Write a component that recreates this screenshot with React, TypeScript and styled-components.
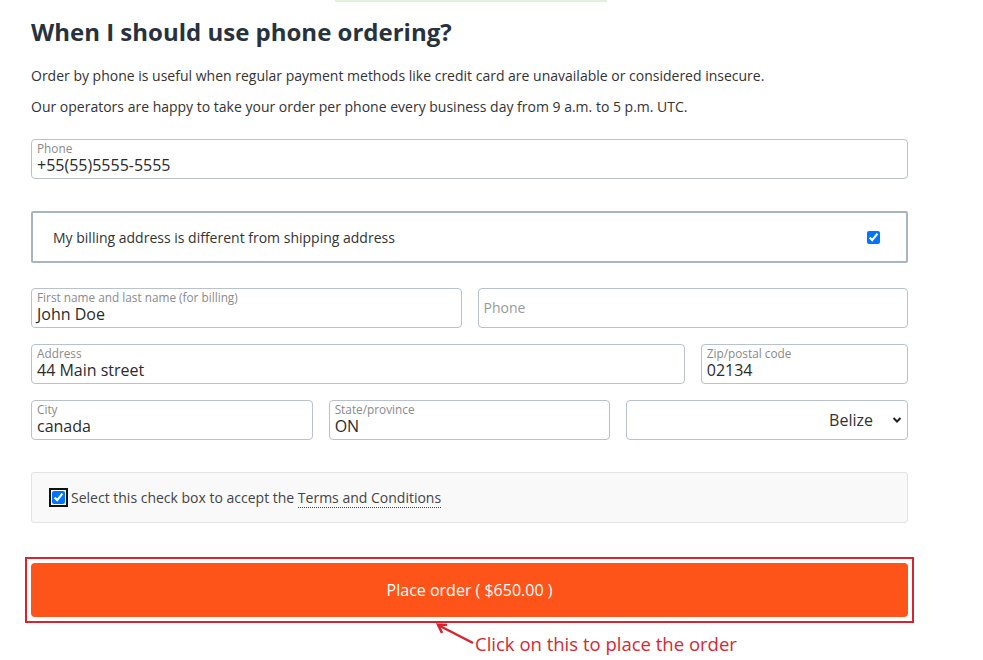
import React from "react";
import styled, { createGlobalStyle } from "styled-components";

const Global = createGlobalStyle`
  html, body { margin: 0; padding: 0; background: #fff; }
  body { font-family: "Open Sans", "Liberation Sans", sans-serif; color: #333; }
  * { box-sizing: border-box; }
`;

const Page = styled.div`
  width: 983px;
  height: 660px;
  overflow: hidden;
  position: relative;
`;

const TopBar = styled.div`
  margin-left: 335px;
  width: 272px;
  height: 2px;
  background: #e4f0dc;
`;

const Container = styled.div`
  width: 877px;
  margin-left: 31px;
  display: flex;
  flex-direction: column;
`;

const Heading = styled.h2`
  margin: 15px 0 0;
  font-size: 24px;
  line-height: 29px;
  font-weight: 700;
  color: #28323d;
`;

const Para = styled.p<{ $top: number }>`
  margin: ${(p) => p.$top}px 0 0;
  font-size: 14px;
  line-height: 21px;
  color: #333;
`;

const Field = styled.label<{ $span: number }>`
  grid-column: span ${(p) => p.$span};
  display: flex;
  flex-direction: column;
  justify-content: center;
  height: 40px;
  padding: 1px 5px 3px;
  border: 1px solid #b9c2cc;
  border-radius: 4px;
  background: #fff;
`;

const FieldLabel = styled.span`
  font-size: 11.8px;
  line-height: 15px;
  color: #8a8a8a;
`;

const FieldValue = styled.span`
  font-size: 16px;
  line-height: 19px;
  color: #2b2b2b;
`;

const Placeholder = styled.span`
  font-size: 14px;
  line-height: 19px;
  color: #999;
`;

const PhoneWrap = styled.div`
  margin-top: 22px;
  display: grid;
  grid-template-columns: repeat(12, 1fr);
`;

const BillingBox = styled.label`
  margin-top: 32px;
  height: 52px;
  border: 2px solid #a8b4c0;
  border-radius: 2px;
  display: flex;
  align-items: center;
  justify-content: space-between;
  padding: 0 26px 0 20px;
  font-size: 14px;
  color: #333;
`;

const Check = styled.input.attrs({ type: "checkbox" })<{ $focused?: boolean }>`
  width: 13px;
  height: 13px;
  margin: 0;
  flex: none;
  accent-color: #0075ff;
  ${(p) =>
    p.$focused
      ? `outline: 2px solid #111; outline-offset: 1px; border-radius: 2px;`
      : ""}
`;

const FormGrid = styled.div`
  margin-top: 25px;
  display: grid;
  grid-template-columns: repeat(12, 1fr);
  column-gap: 16px;
  row-gap: 16px;
`;

const SelectWrap = styled.div<{ $span: number }>`
  grid-column: span ${(p) => p.$span};
  position: relative;
  height: 40px;
`;

const Select = styled.select`
  width: 100%;
  height: 40px;
  appearance: none;
  -webkit-appearance: none;
  border: 1px solid #b9c2cc;
  border-radius: 4px;
  background: #fff;
  font-family: "Open Sans", "Liberation Sans", sans-serif;
  font-size: 16px;
  color: #333;
  padding: 0 34px 0 8px;
  text-align: right;
  text-align-last: right;
`;

const Chevron = styled.svg`
  position: absolute;
  right: 6px;
  top: 16px;
  pointer-events: none;
`;

const TermsBox = styled.div`
  margin-top: 32px;
  height: 51px;
  background: #f9f9f9;
  border: 1px solid #e3e3e3;
  border-radius: 3px;
  display: flex;
  align-items: center;
  gap: 6px;
  padding-left: 20px;
  font-size: 14px;
  color: #444;
`;

const TermsLink = styled.a`
  color: #444;
  text-decoration: none;
  border-bottom: 1px dotted #444;
  line-height: 17px;
`;

const Highlight = styled.div`
  margin: 34px -6px 0;
  border: 2px solid #d7232e;
  padding: 4px;
`;

const OrderButton = styled.button`
  width: 100%;
  height: 54px;
  border: none;
  border-radius: 4px;
  background: #fe5419;
  color: #fff;
  font-family: "Open Sans", "Liberation Sans", sans-serif;
  font-size: 16px;
  cursor: pointer;
`;

const Annotation = styled.div`
  display: flex;
  align-items: flex-start;
  margin-left: 404px;
`;

const ArrowSvg = styled.svg`
  flex: none;
`;

const AnnotationText = styled.span`
  margin-top: 9px;
  font-size: 18.5px;
  line-height: 24px;
  color: #d32a35;
  white-space: nowrap;
`;

export default function App() {
  return (
    <Page>
      <Global />
      <TopBar />
      <Container>
        <Heading>When I should use phone ordering?</Heading>
        <Para $top={19}>
          Order by phone is useful when regular payment methods like credit card are unavailable or considered insecure.
        </Para>
        <Para $top={10}>
          Our operators are happy to take your order per phone every business day from 9 a.m. to 5 p.m. UTC.
        </Para>

        <PhoneWrap>
          <Field $span={12}>
            <FieldLabel>Phone</FieldLabel>
            <FieldValue>+55(55)5555-5555</FieldValue>
          </Field>
        </PhoneWrap>

        <BillingBox>
          <span>My billing address is different from shipping address</span>
          <Check defaultChecked />
        </BillingBox>

        <FormGrid>
          <Field $span={6}>
            <FieldLabel>First name and last name (for billing)</FieldLabel>
            <FieldValue>John Doe</FieldValue>
          </Field>
          <Field $span={6}>
            <Placeholder>Phone</Placeholder>
          </Field>
          <Field $span={9}>
            <FieldLabel>Address</FieldLabel>
            <FieldValue>44 Main street</FieldValue>
          </Field>
          <Field $span={3}>
            <FieldLabel>Zip/postal code</FieldLabel>
            <FieldValue>02134</FieldValue>
          </Field>
          <Field $span={4}>
            <FieldLabel>City</FieldLabel>
            <FieldValue>canada</FieldValue>
          </Field>
          <Field $span={4}>
            <FieldLabel>State/province</FieldLabel>
            <FieldValue>ON</FieldValue>
          </Field>
          <SelectWrap $span={4}>
            <Select defaultValue="Belize">
              <option>Belize</option>
            </Select>
            <Chevron width="10" height="8" viewBox="0 0 10 8">
              <path d="M1.5 2 L5 5.5 L8.5 2" fill="none" stroke="#222" strokeWidth="2" />
            </Chevron>
          </SelectWrap>
        </FormGrid>

        <TermsBox>
          <Check defaultChecked $focused />
          <span>
            Select this check box to accept the <TermsLink href="#">Terms and Conditions</TermsLink>
          </span>
        </TermsBox>

        <Highlight>
          <OrderButton>Place order ( $650.00 )</OrderButton>
        </Highlight>

        <Annotation>
          <ArrowSvg width="40" height="24" viewBox="0 0 40 24">
            <path d="M38 20 L3 2" stroke="#d7232e" strokeWidth="2.5" fill="none" />
            <path d="M12 2 L3 1.5 L7 10" stroke="#d7232e" strokeWidth="2.5" fill="none" />
          </ArrowSvg>
          <AnnotationText>Click on this to place the order</AnnotationText>
        </Annotation>
      </Container>
    </Page>
  );
}
